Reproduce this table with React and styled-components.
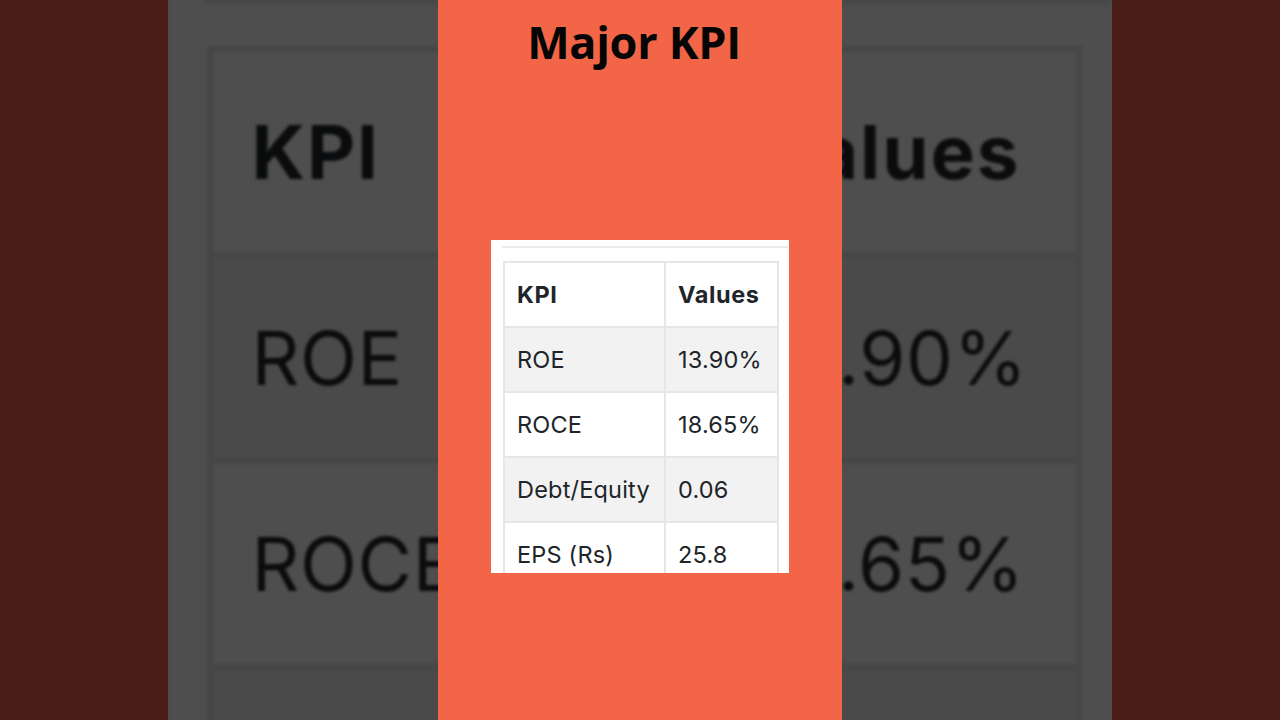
import React from "react";
import styled, { createGlobalStyle } from "styled-components";

const Global = createGlobalStyle`
  html, body { margin: 0; padding: 0; background: #4a1e17; }
  body { font-family: Inter, "Noto Sans", sans-serif; }
`;

const rows = [
  { kpi: "ROE", value: "13.90%" },
  { kpi: "ROCE", value: "18.65%" },
  { kpi: "Debt/Equity", value: "0.06" },
  { kpi: "EPS (Rs)", value: "25.8" },
];

const Frame = styled.div`
  position: relative;
  width: 1280px;
  height: 720px;
  overflow: hidden;
  background: #4a1e17;
  display: flex;
  justify-content: center;
`;

const Backdrop = styled.div`
  position: absolute;
  top: 0;
  bottom: 0;
  left: 168px;
  width: 944px;
  overflow: hidden;
  background: #4b4b4b;
`;

const Zoomed = styled.div`
  position: absolute;
  left: 1px;
  top: -21px;
  transform: scale(3.17);
  transform-origin: 0 0;
  filter: blur(0.55px) brightness(0.305);
`;

const Column = styled.main`
  position: relative;
  width: 404px;
  height: 720px;
  background: #f26647;
  display: flex;
  flex-direction: column;
  align-items: center;
`;

const Title = styled.h1`
  margin: 19px 12px 0 0;
  font-family: "Open Sans", "Noto Sans", sans-serif;
  font-weight: 700;
  font-size: 45px;
  line-height: 45px;
  color: #050505;
  letter-spacing: -0.3px;
`;

const Shot = styled.div`
  width: 298px;
  height: 333px;
  background: #ffffff;
  overflow: hidden;
  padding: 6px 0 0 11px;
  box-sizing: border-box;
  margin-top: ${(p) => (p.$offset ? "176px" : "0")};
`;

const Rule = styled.div`
  width: 286px;
  height: 2px;
  background: #e9ebed;
`;

const Table = styled.table`
  margin-top: 13px;
  margin-left: 1px;
  border-collapse: collapse;
  table-layout: fixed;
  width: 274px;
  font-family: Inter, "Noto Sans", sans-serif;
  font-size: 23.5px;
  color: #212529;
`;

const Row = styled.tr`
  height: 65px;
  background: ${(p) => (p.$striped ? "#f2f2f2" : "#ffffff")};
`;

const Cell = styled.td`
  border: 2px solid #e4e7e9;
  padding: 0 0 0 12px;
  font-weight: ${(p) => (p.$head ? 700 : 400)};
  white-space: nowrap;
  letter-spacing: ${(p) => (p.$head ? "0.6px" : "0.2px")};
  vertical-align: middle;
  text-align: left;
  line-height: 1;
`;

function Screenshot({ offset }) {
  return (
    <Shot $offset={offset}>
      <Rule />
      <Table>
        <colgroup>
          <col style={{ width: 161 }} />
          <col style={{ width: 113 }} />
        </colgroup>
        <tbody>
          <Row>
            <Cell as="th" $head>KPI</Cell>
            <Cell as="th" $head>Values</Cell>
          </Row>
          {rows.map((r, i) => (
            <Row key={r.kpi} $striped={i % 2 === 0}>
              <Cell>{r.kpi}</Cell>
              <Cell>{r.value}</Cell>
            </Row>
          ))}
        </tbody>
      </Table>
    </Shot>
  );
}

export default function App() {
  return (
    <>
      <Global />
      <Frame>
        <Backdrop aria-hidden="true">
          <Zoomed>
            <Screenshot />
          </Zoomed>
        </Backdrop>
        <Column>
          <Title>Major KPI</Title>
          <Screenshot offset />
        </Column>
      </Frame>
    </>
  );
}
